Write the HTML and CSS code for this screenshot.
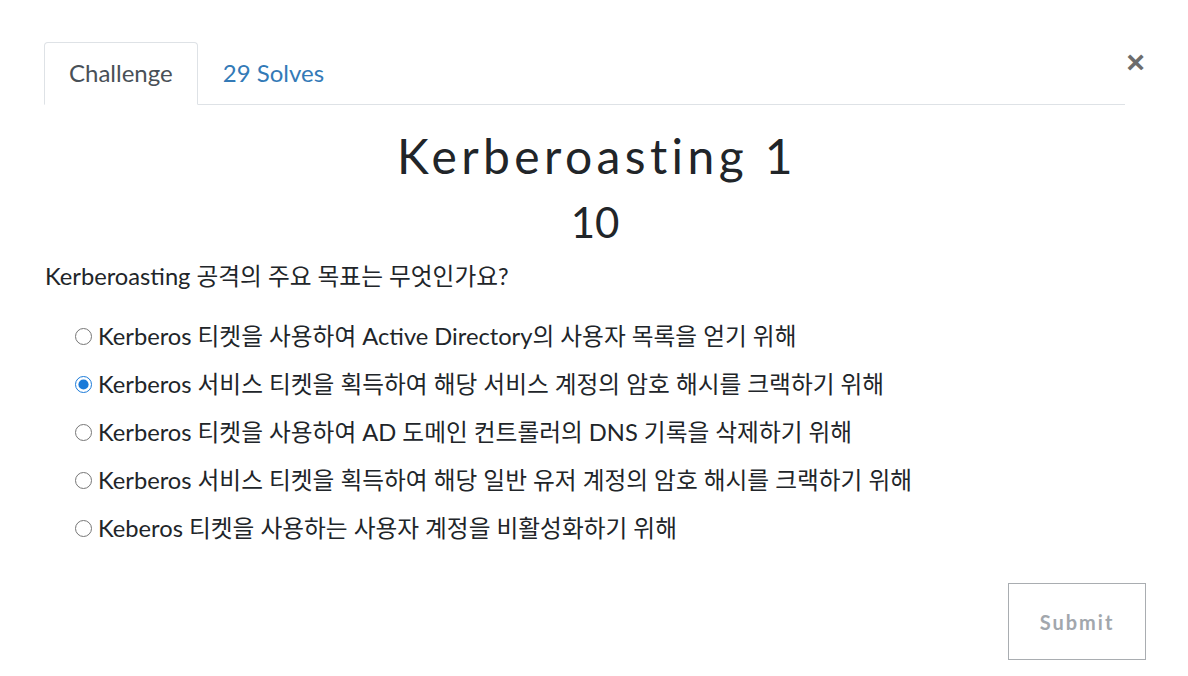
FILE: index.html
```html
<!DOCTYPE html>
<html lang="ko">

<head>
  <meta charset="UTF-8">
  <title>Kerberoasting 1</title>
  <link rel="stylesheet" href="styles.css">
</head>

<body>
  <div class="modal">
    <div class="modal-head">
      <ul class="tabs">
        <li class="tab active">Challenge</li>
        <li class="tab">29 Solves</li>
      </ul>
      <button class="close">&times;</button>
    </div>

    <h2 class="challenge-name">Kerberoasting 1</h2>
    <h3 class="challenge-value">10</h3>

    <p class="description">Kerberoasting 공격의 주요 목표는 무엇인가요?</p>

    <div class="choices">
      <label class="choice"><input type="radio" name="answer"> Kerberos 티켓을 사용하여 Active Directory의 사용자 목록을 얻기 위해</label>
      <label class="choice"><input type="radio" name="answer" checked> Kerberos 서비스 티켓을 획득하여 해당 서비스 계정의 암호 해시를 크랙하기 위해</label>
      <label class="choice"><input type="radio" name="answer"> Kerberos 티켓을 사용하여 AD 도메인 컨트롤러의 DNS 기록을 삭제하기 위해</label>
      <label class="choice"><input type="radio" name="answer"> Kerberos 서비스 티켓을 획득하여 해당 일반 유저 계정의 암호 해시를 크랙하기 위해</label>
      <label class="choice"><input type="radio" name="answer"> Keberos 티켓을 사용하는 사용자 계정을 비활성화하기 위해</label>
    </div>

    <div class="actions">
      <button class="submit">Submit</button>
    </div>
  </div>
</body>

</html>
```

FILE: styles.css
```css
body {
  margin: 0;
  background-color: #ffffff;
  color: #212529;
  font-family: Lato, "Noto Sans CJK KR", sans-serif;
}

.modal {
  padding: 42px 42px 0 44px;
}

.modal-head {
  display: flex;
  align-items: flex-start;
}

.tabs {
  flex: 1;
  display: flex;
  margin: 0;
  padding: 0;
  list-style: none;
  border-bottom: 1px solid #dee2e6;
}

.tab {
  padding: 13px 24px 15px;
  font-size: 24px;
  line-height: 33px;
  color: #337ab7;
  border: 1px solid transparent;
  border-radius: 4px 4px 0 0;
  margin-bottom: -1px;
}

.tab.active {
  color: #495057;
  background-color: #ffffff;
  border-color: #dee2e6 #dee2e6 #ffffff;
}

.close {
  width: 21px;
  margin: 4px 0 0 0;
  padding: 0;
  border: none;
  background: none;
  font-family: Arial, sans-serif;
  font-size: 32px;
  font-weight: bold;
  line-height: 32px;
  color: #6c6c6c;
}

.challenge-name {
  margin: 22px 0 0;
  padding-left: 4px;
  text-align: center;
  font-family: Lato, sans-serif;
  font-weight: 400;
  font-size: 48px;
  line-height: 58px;
  letter-spacing: 4.4px;
}

.challenge-value {
  margin: 9px 0 0;
  text-align: center;
  font-weight: 400;
  font-size: 42px;
  line-height: 56px;
}

.description {
  margin: 10px 0 0 1px;
  font-size: 23.7px;
  line-height: 33px;
}

.choices {
  display: flex;
  flex-direction: column;
  gap: 15px;
  margin: 27px 0 0 31px;
}

.choice {
  display: flex;
  align-items: center;
  gap: 6px;
  font-size: 23.7px;
  line-height: 33px;
}

.choice input {
  width: 17px;
  height: 17px;
  margin: 0;
  accent-color: #1a7ad9;
}

.actions {
  display: flex;
  justify-content: flex-end;
  margin-top: 38px;
}

.submit {
  width: 138px;
  height: 77px;
  border: 1px solid #a9adb1;
  background-color: #ffffff;
  color: #a2a7ad;
  font-family: Lato, sans-serif;
  font-size: 20px;
  font-weight: bold;
  letter-spacing: 2px;
}
```
